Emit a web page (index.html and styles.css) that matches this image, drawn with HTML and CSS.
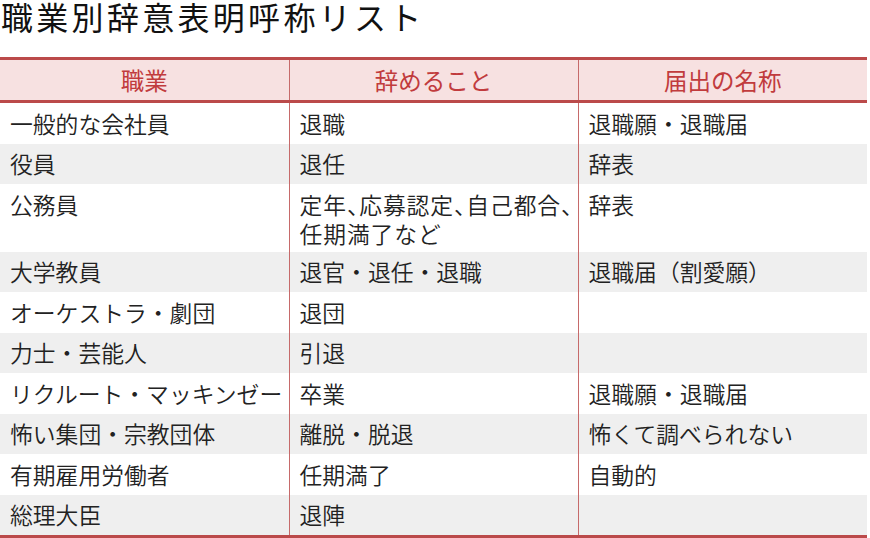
FILE: index.html
```html
<!DOCTYPE html>
<html lang="ja">
<head>
<meta charset="utf-8">
<link rel="stylesheet" href="styles.css">
</head>
<body>
<h1 class="title">職業別辞意表明呼称リスト</h1>
<table class="list">
<thead>
<tr><th>職業</th><th>辞めること</th><th>届出の名称</th></tr>
</thead>
<tbody>
<tr><td>一般的な会社員</td><td>退職</td><td>退職願・退職届</td></tr>
<tr class="alt"><td>役員</td><td>退任</td><td>辞表</td></tr>
<tr><td>公務員</td><td class="nw half">定年、応募認定、自己都合、<br>任期満了など</td><td>辞表</td></tr>
<tr class="alt"><td>大学教員</td><td>退官・退任・退職</td><td>退職届（割愛願）</td></tr>
<tr><td>オーケストラ・劇団</td><td>退団</td><td></td></tr>
<tr class="alt"><td>力士・芸能人</td><td>引退</td><td></td></tr>
<tr><td class="nw">リクルート・マッキンゼー</td><td>卒業</td><td>退職願・退職届</td></tr>
<tr class="alt"><td>怖い集団・宗教団体</td><td>離脱・脱退</td><td>怖くて調べられない</td></tr>
<tr><td>有期雇用労働者</td><td>任期満了</td><td>自動的</td></tr>
<tr class="alt"><td>総理大臣</td><td>退陣</td><td></td></tr>
</tbody>
</table>
</body>
</html>
```
FILE: styles.css
```css
html, body {
  margin: 0;
  padding: 0;
  background: #ffffff;
}
body {
  font-family: "Noto Sans CJK JP", "Noto Sans", sans-serif;
  color: #222;
  width: 870px;
}
.title {
  margin: 0;
  padding: 0 0 0 1px;
  font-size: 32px;
  line-height: 33px;
  font-weight: 400;
  letter-spacing: 3.3px;
  color: #111;
}
.list {
  margin-top: 24px;
  width: 867px;
  border-collapse: collapse;
  table-layout: fixed;
  border-top: 3px solid #bb4a4a;
  border-bottom: 3px solid #bb4a4a;
}
.list th {
  background: #f7e1e1;
  color: #c13b3d;
  font-weight: 400;
  font-size: 23.5px;
  line-height: 28px;
  height: 40px;
  padding: 0;
  text-align: center;
  border-bottom: 3px solid #bb4a4a;
  border-left: 1px solid #c66a6a;
}
.list td {
  font-size: 22.8px;
  font-weight: 350;
  line-height: 27px;
  padding: 6.75px 9px 6.75px 10px;
  vertical-align: top;
  border-left: 1px solid #c66a6a;
  text-align: left;
}
.list th:first-child, .list td:first-child {
  border-left: none;
}
.list tr.alt td {
  background: #efefef;
}
.nw {
  white-space: nowrap;
}
.list td.half {
  font-feature-settings: "halt";
  letter-spacing: 0.9px;
  line-height: 29px;
  padding-top: 5.75px;
  padding-bottom: 3.75px;
}
```
